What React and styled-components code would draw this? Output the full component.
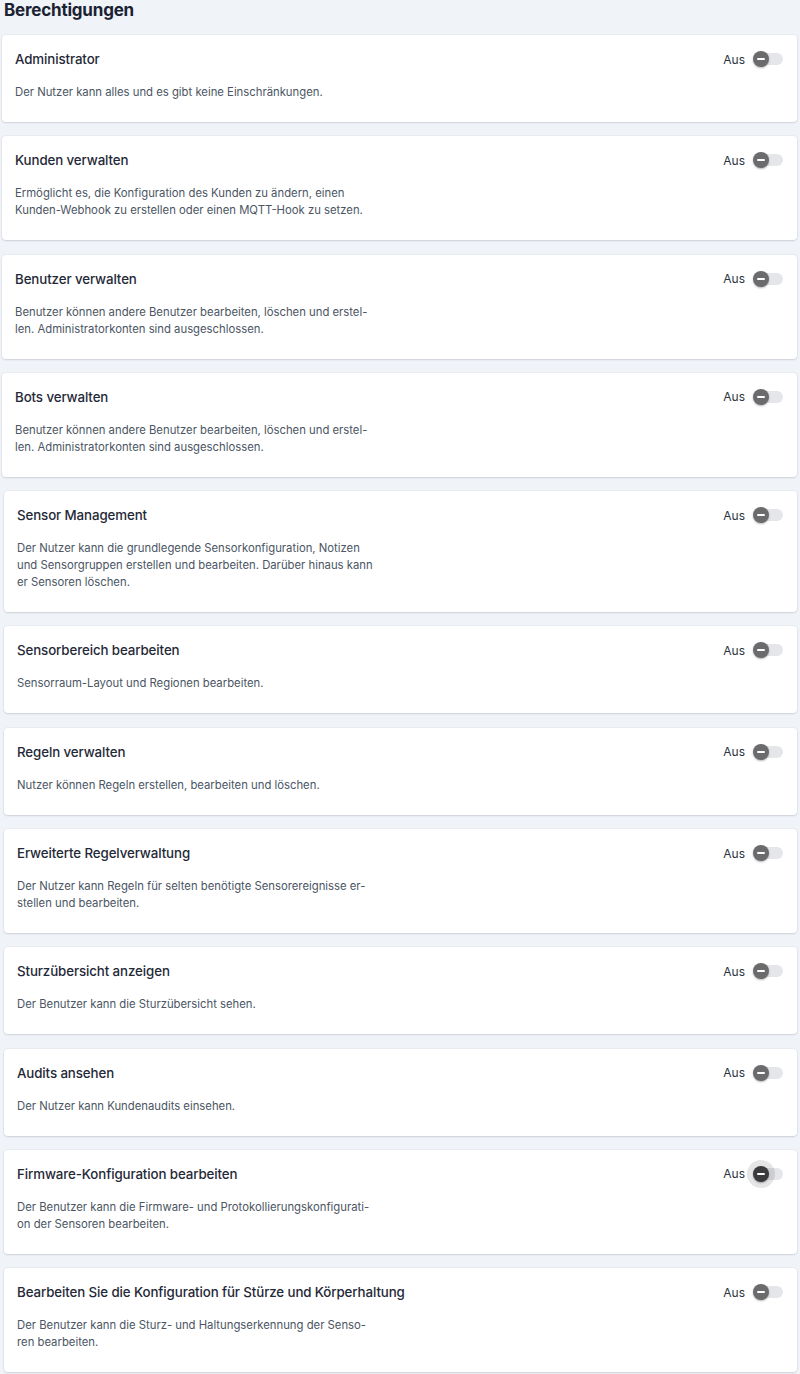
import styled, { createGlobalStyle } from "styled-components";

const GlobalStyle = createGlobalStyle`
    html, body {
        margin: 0;
        padding: 0;
        background: #f0f3f8;
    }
    body {
        font-family: Inter, "Noto Sans", "Liberation Sans", sans-serif;
        color: #1f2937;
    }
`;

const Page = styled.div`
    width: 800px;
    padding: 0 3px 3px 0;
    box-sizing: border-box;
`;

const Heading = styled.h2`
    margin: 0;
    padding: 0 0 0 4px;
    height: 35px;
    line-height: 21px;
    font-size: 17px;
    font-weight: 700;
    color: #1a2233;
    letter-spacing: -0.2px;
`;

const List = styled.div`
    display: flex;
    flex-direction: column;
    gap: 14.3px;
`;

// 권한 카드 하나
const Card = styled.div`
    margin-left: ${(p) => (p.$shift ? "4px" : "2px")};
    background: #ffffff;
    border-radius: 4px;
    box-shadow: 0 1px 2px rgba(16, 24, 40, 0.12), 0 0 0 1px rgba(16, 24, 40, 0.03);
    padding: 14px 14px 21px 13px;
    display: flex;
    justify-content: space-between;
    align-items: flex-start;
`;

const Texts = styled.div`
    display: flex;
    flex-direction: column;
`;

const Title = styled.div`
    font-size: 13.3px;
    line-height: 20px;
    font-weight: 500;
    color: #1f2937;
    letter-spacing: -0.1px;
`;

const Desc = styled.div`
    margin-top: 15px;
    font-size: 11.3px;
    line-height: 17px;
    color: #4b5563;

    span {
        display: block;
        white-space: nowrap;
    }
`;

const Control = styled.div`
    display: flex;
    align-items: center;
    height: 20px;
    gap: 8px;
`;

const Label = styled.span`
    font-size: 12px;
    color: #2d3340;
`;

const Switch = styled.div`
    position: relative;
    width: 29px;
    height: 12px;
    border-radius: 6px;
    background: #e4e6ea;
    margin-left: 1px;
`;

const Knob = styled.div`
    position: absolute;
    left: -1px;
    top: 50%;
    width: 16px;
    height: 16px;
    margin-top: -8px;
    border-radius: 50%;
    background: ${(p) => (p.$focus ? "#3a3a3c" : "#6b6b6d")};
    box-shadow: ${(p) =>
        p.$focus
            ? "0 0 0 6px rgba(0, 0, 0, 0.1), 0 1px 2px rgba(0,0,0,0.3)"
            : "0 1px 2px rgba(0,0,0,0.3)"};
    display: flex;
    align-items: center;
    justify-content: center;

    &::after {
        content: "";
        width: 8px;
        height: 2px;
        border-radius: 1px;
        background: #ffffff;
    }
`;

const permissions = [
    {
        title: "Administrator",
        lines: ["Der Nutzer kann alles und es gibt keine Einschränkungen."],
    },
    {
        title: "Kunden verwalten",
        lines: [
            "Ermöglicht es, die Konfiguration des Kunden zu ändern, einen",
            "Kunden-Webhook zu erstellen oder einen MQTT-Hook zu setzen.",
        ],
    },
    {
        title: "Benutzer verwalten",
        lines: [
            "Benutzer können andere Benutzer bearbeiten, löschen und erstel-",
            "len. Administratorkonten sind ausgeschlossen.",
        ],
    },
    {
        title: "Bots verwalten",
        lines: [
            "Benutzer können andere Benutzer bearbeiten, löschen und erstel-",
            "len. Administratorkonten sind ausgeschlossen.",
        ],
    },
    {
        title: "Sensor Management",
        shift: true,
        lines: [
            "Der Nutzer kann die grundlegende Sensorkonfiguration, Notizen",
            "und Sensorgruppen erstellen und bearbeiten. Darüber hinaus kann",
            "er Sensoren löschen.",
        ],
    },
    {
        title: "Sensorbereich bearbeiten",
        shift: true,
        lines: ["Sensorraum-Layout und Regionen bearbeiten."],
    },
    {
        title: "Regeln verwalten",
        shift: true,
        lines: ["Nutzer können Regeln erstellen, bearbeiten und löschen."],
    },
    {
        title: "Erweiterte Regelverwaltung",
        shift: true,
        lines: [
            "Der Nutzer kann Regeln für selten benötigte Sensorereignisse er-",
            "stellen und bearbeiten.",
        ],
    },
    {
        title: "Sturzübersicht anzeigen",
        shift: true,
        lines: ["Der Benutzer kann die Sturzübersicht sehen."],
    },
    {
        title: "Audits ansehen",
        shift: true,
        lines: ["Der Nutzer kann Kundenaudits einsehen."],
    },
    {
        title: "Firmware-Konfiguration bearbeiten",
        shift: true,
        focus: true,
        lines: [
            "Der Benutzer kann die Firmware- und Protokollierungskonfigurati-",
            "on der Sensoren bearbeiten.",
        ],
    },
    {
        title: "Bearbeiten Sie die Konfiguration für Stürze und Körperhaltung",
        shift: true,
        lines: [
            "Der Benutzer kann die Sturz- und Haltungserkennung der Senso-",
            "ren bearbeiten.",
        ],
    },
];

function App() {
    return (
        <Page>
            <GlobalStyle />
            <Heading>Berechtigungen</Heading>
            <List>
                {permissions.map((item) => (
                    <Card key={item.title} $shift={item.shift}>
                        <Texts>
                            <Title>{item.title}</Title>
                            <Desc>
                                {item.lines.map((line) => (
                                    <span key={line}>{line}</span>
                                ))}
                            </Desc>
                        </Texts>
                        <Control>
                            <Label>Aus</Label>
                            <Switch>
                                <Knob $focus={item.focus} />
                            </Switch>
                        </Control>
                    </Card>
                ))}
            </List>
        </Page>
    );
}

export default App;
